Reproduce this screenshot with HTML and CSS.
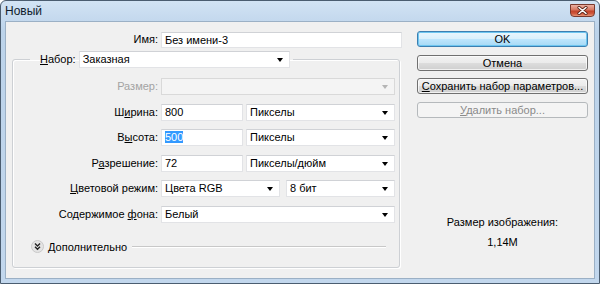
FILE: index.html
```html
<!DOCTYPE html>
<html lang="ru">
<head>
    <meta charset="UTF-8">
    <title>Новый</title>
    <link rel="stylesheet" href="styles.css">
</head>
<body>
    <div class="window">
        <div class="titlebar">
            <span class="title">Новый</span>
            <span class="close">
                <svg width="11" height="9" viewBox="0 0 11 9">
                    <path d="M2 1.5 L9 7.5 M9 1.5 L2 7.5" stroke="#5a2418" stroke-width="3.2" stroke-linecap="round"/>
                    <path d="M2 1.5 L9 7.5 M9 1.5 L2 7.5" stroke="#fff" stroke-width="1.6" stroke-linecap="round"/>
                </svg>
            </span>
        </div>
        <div class="client">
            <div class="main">
                <div class="name-row">
                    <span class="lbl">Имя:</span>
                    <div class="field name-field">Без имени-3</div>
                </div>
                <fieldset class="group">
                    <legend class="group-head">
                        <span class="lbl"><u>Н</u>абор:</span>
                        <div class="select preset">Заказная<i class="arrow"></i></div>
                    </legend>
                    <div class="form">
                        <span class="lbl off">Размер:</span>
                        <div class="select off"><i class="arrow"></i></div>

                        <span class="lbl">Ш<u>и</u>рина:</span>
                        <div class="pair">
                            <div class="field num">800</div>
                            <div class="select unit">Пикселы<i class="arrow"></i></div>
                        </div>

                        <span class="lbl">В<u>ы</u>сота:</span>
                        <div class="pair">
                            <div class="field num"><span class="sel">500</span></div>
                            <div class="select unit">Пикселы<i class="arrow"></i></div>
                        </div>

                        <span class="lbl">Р<u>а</u>зрешение:</span>
                        <div class="pair">
                            <div class="field num">72</div>
                            <div class="select unit">Пикселы/дюйм<i class="arrow"></i></div>
                        </div>

                        <span class="lbl"><u>Ц</u>ветовой режим:</span>
                        <div class="pair">
                            <div class="select mode">Цвета RGB<i class="arrow"></i></div>
                            <div class="select bits">8 бит<i class="arrow"></i></div>
                        </div>

                        <span class="lbl">Содержимое <u>ф</u>она:</span>
                        <div class="select">Белый<i class="arrow"></i></div>
                    </div>
                    <div class="advanced">
                        <span class="adv-btn">
                            <svg width="13" height="13" viewBox="0 0 13 13">
                                <circle cx="6.5" cy="6.5" r="6" fill="#e4e4e4" stroke="#c8c8c8"/>
                                <path d="M4 3.5 L6.5 6 L9 3.5 M4 6.8 L6.5 9.3 L9 6.8" fill="none" stroke="#222" stroke-width="1.4"/>
                            </svg>
                        </span>
                        <span>Дополнительно</span>
                        <span class="rule"></span>
                    </div>
                </fieldset>
            </div>
            <div class="side">
                <div class="btn default">OK</div>
                <div class="btn">Отмена</div>
                <div class="btn"><u>С</u>охранить набор параметров...</div>
                <div class="btn off"><u>У</u>далить набор...</div>
                <div class="info">
                    <div>Размер изображения:</div>
                    <div>1,14М</div>
                </div>
            </div>
        </div>
    </div>
</body>
</html>
```

FILE: styles.css
```css
body {
    margin: 0;
    font-family: 'Liberation Sans', Arial, sans-serif;
    font-size: 11px;
    color: #000;
    background: #fff;
}
.window {
    width: 600px;
    height: 284px;
    box-sizing: border-box;
    border: 1px solid #4b5d70;
    border-radius: 6px 6px 0 0;
    background: linear-gradient(#d2e3f4, #bcd3ea 30px, #c2d7ed);
    display: flex;
    flex-direction: column;
}
.titlebar {
    height: 21px;
    display: flex;
    align-items: flex-start;
    justify-content: space-between;
    flex-shrink: 0;
}
.title {
    font-size: 12px;
    line-height: 21px;
    padding-left: 4px;
    color: #0f1c2c;
}
.close {
    width: 25px;
    height: 13px;
    margin: 3px 4px 0 0;
    box-sizing: border-box;
    border: 1px solid #7a3a2e;
    border-radius: 0 0 4px 4px;
    background: linear-gradient(#eab1a3, #d7765f 45%, #c2432a 55%, #d25b3f 80%, #e69a7c);
    display: flex;
    align-items: center;
    justify-content: center;
}
.client {
    flex: 1;
    margin: 0 5px 5px;
    background: #f0f0f0;
    box-shadow: 0 0 0 1px #9bb0c5;
    display: flex;
}
.main {
    width: 396px;
    padding-top: 9px;
}
.lbl {
    text-align: right;
    white-space: nowrap;
    line-height: 17px;
}
.lbl.off {
    color: #a3a3a3;
}
.name-row {
    display: grid;
    grid-template-columns: 152px 241px;
    column-gap: 3px;
    align-items: center;
}
.field, .select {
    height: 17px;
    box-sizing: border-box;
    background: #fff;
    border: 1px solid #e2e3e6;
    border-top-color: #d0d2d6;
    padding-left: 3px;
    line-height: 15px;
    white-space: nowrap;
}
.name-field {
    height: 16px;
    line-height: 14px;
}
.select {
    position: relative;
}
.arrow {
    position: absolute;
    right: 6px;
    top: 6px;
    border-left: 3px solid transparent;
    border-right: 3px solid transparent;
    border-top: 4px solid #000;
}
.select.off {
    background: #f4f4f4;
    border-color: #d9d9d9;
}
.select.off .arrow {
    border-top-color: #b5b5b5;
}
.group {
    margin: 3px 2px 0 6px;
    padding: 0 0 13px;
    border: 1px solid #cdd0d4;
    border-radius: 3px;
    box-shadow: 1px 1px 0 #fff, inset 1px 1px 0 #fff;
    min-width: 0;
}
.group-head {
    margin-left: 17px;
    padding: 0 3px 0 10px;
    display: flex;
    align-items: center;
    gap: 3px;
}
.preset {
    width: 211px;
}
.form {
    padding-top: 10px;
    display: grid;
    grid-template-columns: 145px 234px;
    grid-auto-rows: 17px;
    column-gap: 3px;
    row-gap: 8.5px;
}
.pair {
    display: flex;
    justify-content: space-between;
}
.num {
    width: 82px;
}
.unit {
    width: 149px;
}
.mode {
    width: 119px;
}
.bits {
    width: 109px;
}
.sel {
    background: #3399ff;
    color: #fff;
}
.advanced {
    margin: 17px 13px 0 18px;
    height: 14px;
    display: flex;
    align-items: center;
    gap: 4px;
}
.adv-btn {
    display: flex;
}
.rule {
    flex: 1;
    margin-left: 1px;
    border-top: 1px solid #c8c8c8;
    border-bottom: 1px solid #fff;
}
.side {
    width: 171px;
    margin-left: 15px;
    padding-top: 9px;
    display: flex;
    flex-direction: column;
    gap: 7.5px;
}
.btn {
    height: 16px;
    box-sizing: border-box;
    border: 1px solid #707070;
    border-radius: 3px;
    background: linear-gradient(#f2f2f2, #ebebeb 50%, #dddddd 50%, #cfcfcf);
    box-shadow: inset 0 0 0 1px rgba(255, 255, 255, 0.7);
    text-align: center;
    line-height: 14px;
    white-space: nowrap;
}
.btn.default {
    border-color: #3c7fb1;
    background: linear-gradient(#eaf6fd, #d9f0fc 50%, #bee6fd 50%, #a7d9f5);
    box-shadow: inset 0 0 0 1px #6ec6f0;
}
.btn.off {
    border-color: #b5b9bc;
    background: #f4f4f4;
    box-shadow: none;
    color: #8a8a8a;
}
.info {
    margin-top: 87px;
    text-align: center;
    line-height: 20px;
}
```
